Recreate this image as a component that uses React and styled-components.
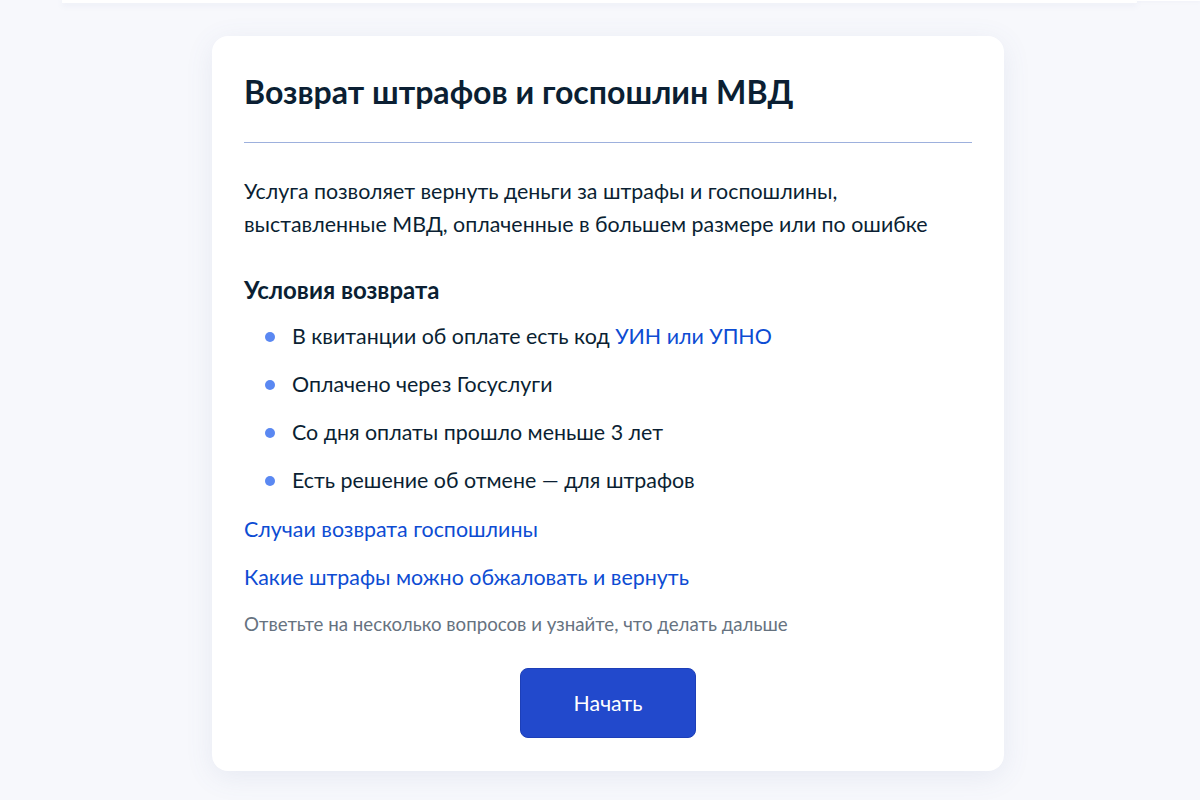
import React from "react";
import styled, { createGlobalStyle } from "styled-components";

const Global = createGlobalStyle`
  html, body {
    margin: 0;
    padding: 0;
    background: #f7f8fc;
  }
  body {
    font-family: Lato, "Noto Sans", sans-serif;
    color: #0b1f33;
    -webkit-font-smoothing: antialiased;
  }
`;

const Page = styled.div`
  min-height: 800px;
  display: flex;
  flex-direction: column;
  align-items: center;
`;

const HeaderEdge = styled.div`
  align-self: stretch;
  display: flex;
  height: 3px;
  padding-left: 62px;
`;

const HeaderBar = styled.div`
  width: 1075px;
  height: 3px;
  background: #ffffff;
  box-shadow: 0 2px 6px rgba(105, 125, 180, 0.12);
`;

const HeaderTail = styled.div`
  flex: 1;
  height: 1px;
  background: #ffffff;
  box-shadow: 0 1px 3px rgba(105, 125, 180, 0.1);
`;

const Card = styled.section`
  margin: 33px 0 0 16px;
  width: 792px;
  box-sizing: border-box;
  background: #ffffff;
  border-radius: 16px;
  box-shadow: 0 6px 28px rgba(87, 108, 160, 0.1);
  padding: 36px 32px 33px;
  display: flex;
  flex-direction: column;
`;

const Title = styled.h1`
  margin: 0;
  font-size: 32.1px;
  line-height: 40px;
  font-weight: 700;
  color: #0b1f33;
`;

const Divider = styled.hr`
  margin: 30px 0 32px;
  border: 0;
  height: 1px;
  background: #9db0dd;
`;

const Lead = styled.p`
  margin: 0;
  font-size: 21.4px;
  line-height: 33px;
  color: #0b1f33;
`;

const Subtitle = styled.h2`
  margin: 33px 0 0;
  font-size: 24px;
  line-height: 32px;
  font-weight: 700;
  color: #0b1f33;
`;

const List = styled.ul`
  list-style: none;
  margin: 14px 0 0;
  padding: 0 0 0 21px;
  display: flex;
  flex-direction: column;
  gap: 15px;
`;

const Item = styled.li`
  display: flex;
  align-items: center;
  gap: 17px;
  font-size: 21.4px;
  line-height: 33px;
  color: #0b1f33;
`;

const Dot = styled.span`
  flex: none;
  width: 10px;
  height: 10px;
  border-radius: 50%;
  background: #5a88f2;
`;

const Link = styled.a`
  color: #0d4cd3;
  text-decoration: none;
  font-size: 21.4px;
  line-height: 33px;
`;

const Links = styled.div`
  margin-top: 16px;
  display: flex;
  flex-direction: column;
  align-items: flex-start;
  gap: 15px;
`;

const Hint = styled.p`
  margin: 16px 0 0;
  font-size: 18.7px;
  line-height: 28px;
  color: #66727f;
`;

const Actions = styled.div`
  margin-top: 30px;
  display: flex;
  justify-content: center;
`;

const Button = styled.button`
  width: 176px;
  height: 70px;
  border: 1px solid #1d3fb8;
  border-radius: 8px;
  background: #2249cc;
  color: #ffffff;
  font-family: Lato, "Noto Sans", sans-serif;
  font-size: 21.3px;
  cursor: pointer;
`;

const conditions = [
  <>
    В квитанции об оплате есть код <Link href="#">УИН или УПНО</Link>
  </>,
  "Оплачено через Госуслуги",
  "Со дня оплаты прошло меньше 3 лет",
  "Есть решение об отмене — для штрафов",
];

export default function App() {
  return (
    <>
      <Global />
      <Page>
        <HeaderEdge>
          <HeaderBar />
          <HeaderTail />
        </HeaderEdge>
        <Card>
          <Title>Возврат штрафов и госпошлин МВД</Title>
          <Divider />
          <Lead>
            Услуга позволяет вернуть деньги за штрафы и госпошлины,
            <br />
            выставленные МВД, оплаченные в большем размере или по ошибке
          </Lead>
          <Subtitle>Условия возврата</Subtitle>
          <List>
            {conditions.map((c, i) => (
              <Item key={i}>
                <Dot />
                <span>{c}</span>
              </Item>
            ))}
          </List>
          <Links>
            <Link href="#">Случаи возврата госпошлины</Link>
            <Link href="#">Какие штрафы можно обжаловать и вернуть</Link>
          </Links>
          <Hint>Ответьте на несколько вопросов и узнайте, что делать дальше</Hint>
          <Actions>
            <Button>Начать</Button>
          </Actions>
        </Card>
      </Page>
    </>
  );
}
